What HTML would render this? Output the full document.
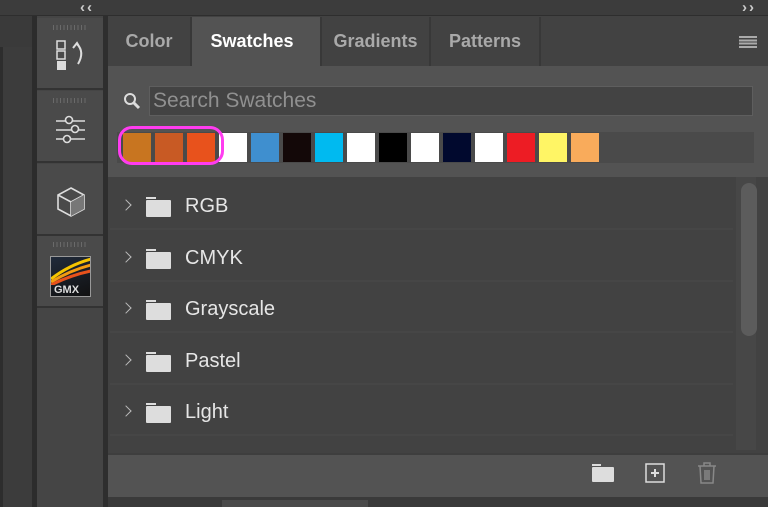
<!DOCTYPE html>
<html><head><style>
*{margin:0;padding:0;box-sizing:border-box}
body{width:768px;height:507px;background:#353535;position:relative;overflow:hidden;font-family:"Liberation Sans",sans-serif}
.a{position:absolute}
.tab{position:absolute;top:17px;height:49px;font-size:18px;font-weight:bold;color:#a9a9a9;line-height:49px;text-align:center;background:#424242;border-right:2px solid #383838}
.sw{position:absolute;top:133px;width:28px;height:29px}
.row{position:absolute;left:110px;width:623px;height:50px;border-bottom:2px solid #464646}
.row span{position:absolute;left:75px;top:15px;font-size:20px;color:#e6e6e6}
.row .chev{position:absolute;left:12px;top:21px;width:8px;height:8px;border-right:1.5px solid #bbb;border-top:1.5px solid #bbb;transform:rotate(45deg)}
.row .fold{position:absolute;left:36px;top:20px;width:25px;height:17px;background:#ddd;border-radius:1px}
.row .fold:before{content:"";position:absolute;left:0;top:-3px;width:10px;height:2px;background:#ddd}
.grip{position:absolute;left:16px;top:7px;width:34px;height:5px;background:repeating-linear-gradient(90deg,#6a6a6a 0 1px,transparent 1px 3.5px)}
.ib{position:absolute;left:37px;width:66px;background:#4a4a4a;border-bottom:2px solid #333}
.chv{position:absolute;top:-1px;color:#ccc;font-size:15px;font-weight:bold}
</style></head><body>
<div class="a" style="left:0;top:0;width:768px;height:16px;background:#3c3c3c;border-bottom:1px solid #2e2e2e"></div>
<div class="chv" style="left:80px">‹</div><div class="chv" style="left:87px">‹</div>
<div class="chv" style="left:742px">›</div><div class="chv" style="left:749px">›</div>
<div class="a" style="left:0;top:16px;width:32px;height:31px;background:#3a3a3a"></div>
<div class="a" style="left:0;top:47px;width:3px;height:460px;background:#2d2d2d"></div>
<div class="a" style="left:3px;top:47px;width:29px;height:460px;background:#3c3c3c"></div>
<div class="a" style="left:32px;top:16px;width:5px;height:491px;background:#2c2c2c"></div>
<div class="a" style="left:37px;top:16px;width:66px;height:491px;background:#454545"></div>
<div class="a" style="left:103px;top:16px;width:5px;height:491px;background:#2e2e2e"></div>
<div class="ib" style="top:18px;height:72px"><div class="grip"></div>
<svg class="a" style="left:18px;top:22px" width="32" height="36"><rect x="2" y="1" width="8" height="8" fill="none" stroke="#ddd" stroke-width="1.5"/><rect x="2" y="11" width="8" height="8" fill="none" stroke="#ddd" stroke-width="1.5"/><rect x="2" y="21" width="9" height="9" fill="#ddd"/><path d="M18 8 L22 3 L25 8 M22 4 Q30 12 23 24" fill="none" stroke="#ddd" stroke-width="2"/></svg></div>
<div class="ib" style="top:91px;height:72px"><div class="grip"></div>
<svg class="a" style="left:18px;top:24px" width="32" height="30" stroke="#ddd" stroke-width="1.6" fill="#454545"><line x1="1" y1="6" x2="30" y2="6"/><line x1="1" y1="15" x2="30" y2="15"/><line x1="1" y1="24" x2="30" y2="24"/><circle cx="14" cy="5" r="3.5"/><circle cx="20" cy="14" r="3.5"/><circle cx="12" cy="24" r="3.5"/></svg></div>
<div class="ib" style="top:164px;height:72px">
<svg class="a" style="left:19px;top:22px" width="30" height="32" fill="none" stroke="#ddd" stroke-width="1.6"><path d="M15 2 L28 9 L28 23 L15 30 L2 23 L2 9 Z M2 9 L15 16 L28 9 M15 16 L15 30"/><path d="M15 16 L28 9 L28 23 L15 30 Z" fill="#777" stroke="none"/></svg></div>
<div class="ib" style="top:236px;height:72px"><div class="grip" style="top:6px"></div>
<div class="a" style="left:13px;top:20px;width:41px;height:41px;background:linear-gradient(160deg,#202a3a,#111);border:1px solid #999;overflow:hidden">
<svg width="41" height="28" class="a" style="left:0;top:0"><path d="M0 22 Q18 8 40 2" stroke="#f5c400" stroke-width="3" fill="none"/><path d="M0 25 Q20 13 40 8" stroke="#f39c12" stroke-width="3" fill="none"/><path d="M0 28 Q20 18 40 14" stroke="#e8521c" stroke-width="3" fill="none"/></svg>
<div class="a" style="left:3px;top:27px;font-size:11px;font-weight:bold;color:#ddd">GMX</div></div></div>
<div class="a" style="left:108px;top:16px;width:660px;height:481px;background:#424242"></div>
<div class="tab" style="left:108px;width:84px">Color</div>
<div class="tab" style="left:192px;width:130px;background:#535353;color:#fff;padding-right:8px">Swatches</div>
<div class="tab" style="left:322px;width:109px">Gradients</div>
<div class="tab" style="left:431px;width:110px">Patterns</div>
<div class="a" style="left:739px;top:36px;width:18px;height:12px;background:repeating-linear-gradient(#aaa 0 2px,transparent 2px 3.3px)"></div>
<div class="a" style="left:108px;top:66px;width:660px;height:111px;background:#535353"></div>
<svg class="a" style="left:123px;top:92px" width="18" height="18" fill="none" stroke="#ddd" stroke-width="2"><circle cx="7" cy="7" r="5"/><line x1="11" y1="11" x2="16" y2="16" stroke-width="3"/></svg>
<div class="a" style="left:149px;top:86px;width:604px;height:30px;background:#434343;border:1px solid #5e5e5e;color:#909090;font-size:21px;line-height:28px;padding-left:3px">Search Swatches</div>
<div class="a" style="left:117px;top:132px;width:637px;height:31px;background:#4a4a4a"></div>
<div class="sw" style="left:123px;background:#c87520"></div>
<div class="sw" style="left:155px;background:#c85a24"></div>
<div class="sw" style="left:187px;background:#e8521c"></div>
<div class="sw" style="left:219px;background:#fff"></div>
<div class="sw" style="left:251px;background:#3f8fcf"></div>
<div class="sw" style="left:283px;background:#130808"></div>
<div class="sw" style="left:315px;background:#00baf0"></div>
<div class="sw" style="left:347px;background:#fff"></div>
<div class="sw" style="left:379px;background:#000"></div>
<div class="sw" style="left:411px;background:#fff"></div>
<div class="sw" style="left:443px;background:#01092e"></div>
<div class="sw" style="left:475px;background:#fff"></div>
<div class="sw" style="left:507px;background:#ed1c24"></div>
<div class="sw" style="left:539px;background:#fff565"></div>
<div class="sw" style="left:571px;background:#f9ab5b"></div>
<div class="a" style="left:118px;top:126px;width:106px;height:39px;border:3px solid #ff3cf0;border-radius:14px"></div>
<div class="row" style="top:180px"><div class="chev"></div><div class="fold"></div><span>RGB</span></div>
<div class="row" style="top:232px"><div class="chev"></div><div class="fold"></div><span>CMYK</span></div>
<div class="row" style="top:283px"><div class="chev"></div><div class="fold"></div><span>Grayscale</span></div>
<div class="row" style="top:335px"><div class="chev"></div><div class="fold"></div><span>Pastel</span></div>
<div class="row" style="top:386px"><div class="chev"></div><div class="fold"></div><span>Light</span></div>
<div class="a" style="left:736px;top:177px;width:20px;height:273px;background:#474747"></div>
<div class="a" style="left:741px;top:183px;width:16px;height:153px;background:#5c5c5c;border-radius:8px"></div>
<div class="a" style="left:108px;top:453px;width:660px;height:44px;background:#535353;border-top:2px solid #3e3e3e"></div>
<svg class="a" style="left:592px;top:464px" width="24" height="20"><rect x="0" y="0" width="9" height="2" fill="#ddd"/><rect x="0" y="3" width="22" height="15" rx="1" fill="#ddd"/></svg>
<svg class="a" style="left:645px;top:463px" width="21" height="21" fill="none" stroke="#ddd" stroke-width="1.5"><rect x="1" y="1" width="18" height="18"/><path d="M10 6v8M6 10h8" stroke-width="2"/></svg>
<svg class="a" style="left:697px;top:462px" width="20" height="24" fill="none" stroke="#888" stroke-width="1.5"><path d="M1 4h18M7 4V1h6v3M3 4l1 17h12l1-17M8 8v10M10 8v10M12 8v10"/></svg>
<div class="a" style="left:108px;top:497px;width:660px;height:10px;background:#3a3a3a"></div>
<div class="a" style="left:222px;top:500px;width:146px;height:7px;background:#4a4a4a"></div>
</body></html>
